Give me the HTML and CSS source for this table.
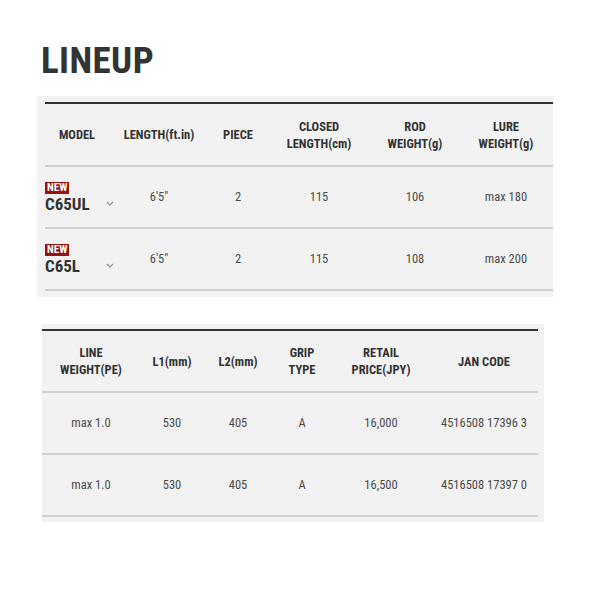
FILE: index.html
```html
<!DOCTYPE html>
<html>
<head>
<meta charset="utf-8">
<link rel="stylesheet" href="styles.css">
</head>
<body>
<div class="page">
  <h2 class="title">LINEUP</h2>
  <div class="panel panel-a">
    <table class="spec spec-a">
      <colgroup>
        <col style="width:64px"><col style="width:100px"><col style="width:58px"><col style="width:104px"><col style="width:88px"><col style="width:94px">
      </colgroup>
      <thead>
        <tr>
          <th>MODEL</th>
          <th>LENGTH(ft.in)</th>
          <th>PIECE</th>
          <th>CLOSED<br>LENGTH(cm)</th>
          <th>ROD<br>WEIGHT(g)</th>
          <th>LURE<br>WEIGHT(g)</th>
        </tr>
      </thead>
      <tbody>
        <tr>
          <td class="model">
            <div class="model-inner">
              <div class="model-name"><span class="badge">NEW</span><span class="name">C65UL</span></div>
              <svg class="chev" width="8" height="5" viewBox="0 0 8 5"><polyline points="1,1 4,4 7,1" fill="none" stroke="#8a8a8a" stroke-width="1.1"/></svg>
            </div>
          </td>
          <td>6'5"</td>
          <td>2</td>
          <td>115</td>
          <td>106</td>
          <td>max 180</td>
        </tr>
        <tr>
          <td class="model">
            <div class="model-inner">
              <div class="model-name"><span class="badge">NEW</span><span class="name">C65L</span></div>
              <svg class="chev" width="8" height="5" viewBox="0 0 8 5"><polyline points="1,1 4,4 7,1" fill="none" stroke="#8a8a8a" stroke-width="1.1"/></svg>
            </div>
          </td>
          <td>6'5"</td>
          <td>2</td>
          <td>115</td>
          <td>108</td>
          <td>max 200</td>
        </tr>
      </tbody>
    </table>
  </div>
  <div class="panel panel-b">
    <table class="spec spec-b">
      <colgroup>
        <col style="width:98px"><col style="width:64px"><col style="width:68px"><col style="width:60px"><col style="width:98px"><col style="width:108px">
      </colgroup>
      <thead>
        <tr>
          <th>LINE<br>WEIGHT(PE)</th>
          <th>L1(mm)</th>
          <th>L2(mm)</th>
          <th>GRIP<br>TYPE</th>
          <th>RETAIL<br>PRICE(JPY)</th>
          <th>JAN CODE</th>
        </tr>
      </thead>
      <tbody>
        <tr>
          <td>max 1.0</td>
          <td>530</td>
          <td>405</td>
          <td>A</td>
          <td>16,000</td>
          <td>4516508 17396 3</td>
        </tr>
        <tr>
          <td>max 1.0</td>
          <td>530</td>
          <td>405</td>
          <td>A</td>
          <td>16,500</td>
          <td>4516508 17397 0</td>
        </tr>
      </tbody>
    </table>
  </div>
</div>
</body>
</html>
```
FILE: styles.css
```css
html, body {
  margin: 0;
  padding: 0;
  background: #ffffff;
}
body {
  font-family: "Roboto Condensed", Roboto, "Liberation Sans", sans-serif;
  font-stretch: 75%;
  color: #444;
}
.page {
  padding: 39px 0 0 37px;
}
.title {
  margin: 0 0 14px 4px;
  font-size: 37px;
  line-height: 43px;
  font-weight: 700;
  letter-spacing: 0.4px;
  color: #333;
}
.panel {
  background: #f2f2f2;
}
.panel-a {
  width: 508px;
  padding: 6px 0 6px 8px;
}
.panel-b {
  width: 496px;
  margin: 27px 0 0 5px;
  padding: 5px 6px 5px 0;
}
.spec {
  border-collapse: collapse;
  table-layout: fixed;
  width: 100%;
  border-top: 2px solid #333;
}
.spec th {
  height: 61px;
  padding: 0;
  font-size: 12.5px;
  line-height: 17px;
  font-weight: 700;
  color: #333;
  text-align: center;
  vertical-align: middle;
  border-bottom: 2px solid #cfcfcf;
  white-space: nowrap;
}
.spec-b th {
  height: 60px;
}
.spec td {
  height: 60px;
  padding: 0;
  font-size: 12.5px;
  line-height: 16px;
  color: #4a4a4a;
  text-align: center;
  vertical-align: middle;
  border-bottom: 2px solid #cfcfcf;
  white-space: nowrap;
}
.spec td.model {
  text-align: left;
  overflow: visible;
}
.model-inner {
  display: flex;
  align-items: center;
  position: relative;
  padding-top: 2px;
}
.model-name {
  display: flex;
  flex-direction: column;
  align-items: flex-start;
}
.badge {
  display: block;
  background: #9b1111;
  color: #fff;
  font-size: 11px;
  font-weight: 700;
  line-height: 12px;
  padding: 0 2px;
}
.name {
  display: block;
  font-size: 17px;
  font-weight: 700;
  line-height: 20px;
  color: #333;
}
.chev {
  position: absolute;
  left: 61px;
  top: 21px;
}
```
